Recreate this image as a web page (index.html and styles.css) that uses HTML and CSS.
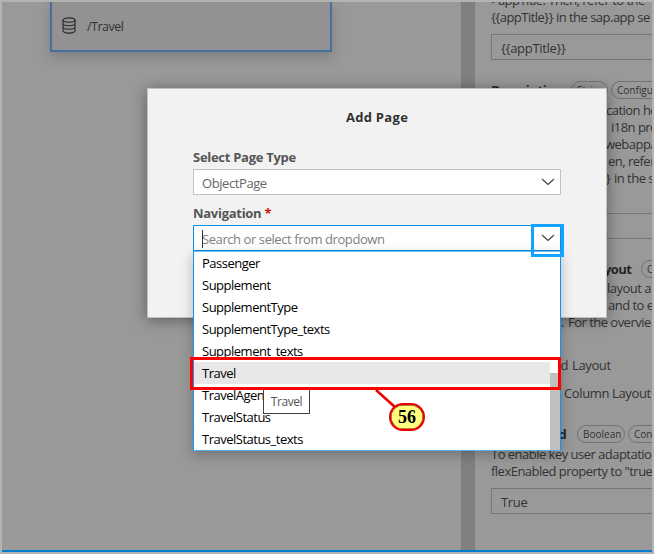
FILE: index.html
```html
<!DOCTYPE html>
<html lang="en">
<head>
<meta charset="utf-8">
<title>Add Page</title>
<link rel="stylesheet" href="styles.css">
</head>
<body>
<div class="frame">
  <main class="canvas">
    <div class="node">
      <svg class="db" width="14" height="17" viewBox="0 0 14 17" fill="none" stroke="#2b2b2b" stroke-width="1.15"><ellipse cx="7" cy="3" rx="6" ry="2.2"/><path d="M1 3v10.6c0 1.4 2.5 2.5 6 2.5s6-1.1 6-2.5V3M1 6.5C1 7.800 3.500 8.700 7 8.700s6-.9 6-2.200M1 10c0 1.300 2.500 2.200 6 2.200s6-.9 6-2.200"/></svg>
      <span class="path">/Travel</span>
    </div>
  </main>
  <div class="divider"></div>
  <aside class="panel">
    <p class="line">&gt;appTitle. Then, refer to the</p>
    <p class="line">{{appTitle}} in the sap.app se</p>
    <div class="field">{{appTitle}}</div>
    <div class="head desc"><b class="h-desc">Description</b><span class="pill string">String</span><span class="pill">Configuration</span></div>
    <p class="line"><span class="lead w115">The appli</span>cation he</p>
    <p class="line"><span class="lead w120">from the</span>i18n pro</p>
    <p class="line"><span class="lead w114">file in</span>webapp/</p>
    <p class="line"><span class="lead w117">Th</span>en, refer</p>
    <p class="line"><span class="lead w122">{{appDescription}}</span>in the s</p>
    <div class="field second"></div>
    <div class="head layout"><b class="h-layout">Flexible Column Layout</b><span class="pill">Configuration</span></div>
    <p class="line"><span class="lead w116">Choose the</span>layout a</p>
    <p class="line"><span class="lead w118">columns</span>and to e</p>
    <p class="line"><span class="lead w77">interactions.</span>For the overvie</p>
    <p class="line">relevant</p>
    <div class="radio"><span class="lead w81">Standard</span>Layout</div>
    <div class="radio"><span class="lead w73">Flexible</span>Column Layout</div>
    <div class="head flex"><b class="h-flex">Flex Enabled</b><span class="pill bool">Boolean</span><span class="pill">Configuration</span></div>
    <p class="line">To enable key user adaptatio</p>
    <p class="line">flexEnabled property to "true</p>
    <div class="field last">True</div>
  </aside>
</div>

<section class="dialog">
  <h1>Add Page</h1>
  <label>Select Page Type</label>
  <div class="select"><span>ObjectPage</span><svg width="14" height="8" viewBox="0 0 14 8" fill="none" stroke="#444" stroke-width="1.2"><path d="M1 1l6 5.500L13 1"/></svg></div>
  <label class="nav">Navigation <i>*</i></label>
  <div class="select active"><span class="caret"></span><span>Search or select from dropdown</span><svg width="14" height="8" viewBox="0 0 14 8" fill="none" stroke="#444" stroke-width="1.2"><path d="M1 1l6 5.500L13 1"/></svg></div>
</section>

<div class="dropdown">
  <ul>
    <li>Passenger</li>
    <li>Supplement</li>
    <li>SupplementType</li>
    <li>SupplementType_texts</li>
    <li>Supplement_texts</li>
    <li class="hover">Travel</li>
    <li>TravelAgency</li>
    <li>TravelStatus</li>
    <li>TravelStatus_texts</li>
  </ul>
  <div class="track"><div class="thumb"></div></div>
</div>
<div class="tooltip">Travel</div>
<div class="mark-blue"></div>
<div class="mark-red"></div>
<svg class="leader" width="30" height="24" viewBox="0 0 30 24"><path d="M4 2L24 20" stroke="#f00000" stroke-width="2.600"/></svg>
<div class="badge">56</div>
</body>
</html>
```
FILE: styles.css
```css
* { box-sizing: border-box; }
body {
  margin: 0; width: 654px; height: 554px; overflow: hidden; position: relative;
  background: #b3b3b3; color: #333;
  font: 13px/17px "Open Sans", "Noto Sans", sans-serif;
  letter-spacing: -0.42px;
}
p, h1, ul { margin: 0; padding: 0; }
.frame {
  display: flex; width: 650px; height: 550px; margin: 2px 2px 0;
  border-bottom: 2px solid #007dd1; background: #999; overflow: hidden;
}
.canvas { width: 459px; padding-left: 48px; flex: none; }
.node {
  width: 282px; height: 50px; border: 2px solid #456f9f; border-top: 0;
  background: #929292; box-shadow: 0 5px 13px rgba(0,0,0,.18);
  display: flex; padding: 15px 0 0 10px;
}
.path { margin: 0 0 0 11px; line-height: 20px; font-size: 12.5px; letter-spacing: -0.5px; }
.divider { width: 14px; background: #808080; flex: none; }
.panel { width: 177px; padding-left: 16px; flex: none; overflow: hidden; white-space: nowrap; margin-top: -10px; letter-spacing: -0.52px; }
.line { height: 17px; }
.field { height: 26px; border: 1px solid #777; border-right: 0; padding: 0 9px; line-height: 26px; margin-top: 8px; letter-spacing: -0.3px; }
.field.second { margin-top: 26px; }
.field.last { margin-top: 8px; }
.head { display: flex; align-items: center; gap: 3px; height: 18px; }
.head.desc { margin: 21px 0 3px; }
.head.layout { margin: 21px 0 2px; }
.head.flex { margin: 21px 0 3px; }
.head b { color: #262626; flex: none; }
.h-desc { width: 77px; letter-spacing: -0.3px; }
.h-layout { width: 147px; text-align: right; padding-right: 14px; }
.h-flex { width: 83px; text-align: right; padding-right: 13px; }
.pill { flex: none; height: 18px; border: 1px solid #737373; border-radius: 9px; padding: 0 5px; font-size: 10px; line-height: 16px; letter-spacing: 0; }
.string { width: 37px; }
.bool { width: 48px; }
.lead { display: inline-block; text-align: right; padding-right: 4px; overflow: hidden; vertical-align: top; }
.w115 { width: 115px; padding-right: 0; }
.w120 { width: 120px; }
.w114 { width: 114px; }
.w117 { width: 117px; padding-right: 2px; }
.w118 { width: 117px; }
.w122 { width: 123px; }
.w116 { width: 116px; }
.w77 { width: 77px; }
.w81 { width: 81px; }
.w73 { width: 73px; }
.radio { height: 28px; line-height: 34px; letter-spacing: -0.37px; }

.dialog {
  position: absolute; left: 147px; top: 88px; width: 460px; height: 230px;
  background: #f2f2f2; border: 1px solid #c0c0c0; padding: 19px 45px 0;
  box-shadow: 0 2px 14px rgba(0,0,0,.4);
}
h1 { text-align: center; font-size: 13px; line-height: 18px; color: #333; letter-spacing: 0.3px; }
label { display: block; margin-top: 21px; height: 20px; line-height: 20px; font-weight: 700; color: #555; letter-spacing: -0.28px; }
label.nav { margin-top: 8px; height: 22px; }
label i { font-style: normal; color: #c9190b; }
.select {
  height: 26px; width: 368px; background: #fff; border: 1px solid #c2c2c2; color: #666;
  display: flex; align-items: center; justify-content: space-between; padding: 2px 5px 0 8px; margin-top: 2px;
}
.select svg { margin-top: -2px; }
.active { border-color: #0f8fe8; color: #808080; margin-top: 0; position: relative; }
.caret { position: absolute; left: 8px; top: 4px; width: 1px; height: 18px; background: #333; }
.dropdown {
  position: absolute; left: 193px; top: 251px; width: 368px; height: 200px; background: #fff;
  border: 1px solid #1294f0; border-top-color: #6bbcf5; border-bottom-color: #58abe4; display: flex;
  box-shadow: 0 4px 12px rgba(0,0,0,.25);
}
.dropdown ul { flex: 1; list-style: none; }
.dropdown li { height: 22px; line-height: 23px; padding-left: 8px; color: #000; letter-spacing: -0.5px; }
.dropdown .hover { background: #e7e7e7; }
.track { width: 10px; padding-top: 121px; }
.thumb { height: 77px; background: #c0c0c0; }
.tooltip {
  position: absolute; left: 263px; top: 388px; width: 47px; height: 26px; background: #fff;
  border: 1px solid #404040; color: #555; font-size: 12px; line-height: 25px; text-align: center;
}
.mark-blue { position: absolute; left: 531px; top: 224px; width: 33px; height: 33px; border: 3px solid #12a5ff; }
.mark-red { position: absolute; left: 190px; top: 357px; width: 371px; height: 33px; border: 3px solid #f00; }
.leader { position: absolute; left: 372px; top: 388px; }
.badge {
  position: absolute; left: 389px; top: 403px; width: 36px; height: 28px; border: 2px solid #e80000;
  box-shadow: inset 0 0 0 .5px #600; border-radius: 14px; background: #ffff80; color: #000;
  font: bold 18px/25px "Liberation Serif", serif; letter-spacing: 0; text-align: center;
}
```
